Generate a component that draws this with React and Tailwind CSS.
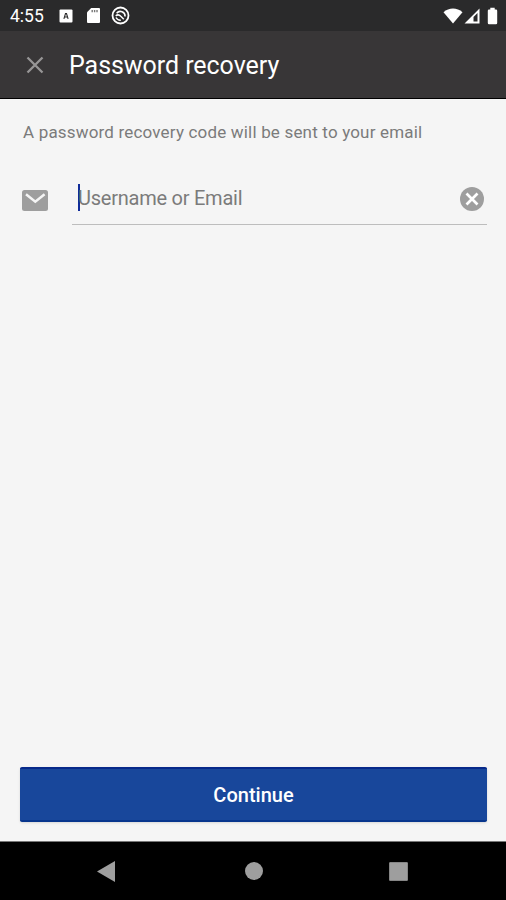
import React, { useState } from "react";

const StatusBar = () => (
  <div className="flex h-[31px] items-center justify-between bg-[#2a2a2b] pl-[10px] pr-[8px] text-white">
    <div className="flex items-center">
      <span className="w-[49px] pt-px text-[17.5px] leading-[30px]">4:55</span>
      <svg width="14" height="14" viewBox="0 0 14 14">
        <rect x="0.5" y="0.5" width="13" height="13" rx="1" fill="#fff" />
        <path d="M4.9 9.8 6.5 4.5h1L9.1 9.8M5.6 8h2.8" fill="none" stroke="#2a2a2b" strokeWidth="1.1" />
      </svg>
      <svg className="ml-[13px]" width="15" height="17" viewBox="0 0 15 17">
        <path d="M5.2 1H13a1 1 0 0 1 1 1v13a1 1 0 0 1-1 1H2a1 1 0 0 1-1-1V5.2z" fill="#fff" />
        <path d="M6.2 3v2.2M8.6 3v2.2M11 3v2.2" stroke="#777" strokeWidth="1.4" />
      </svg>
      <svg className="ml-[10px]" width="19" height="19" viewBox="0 0 19 19" fill="none" stroke="#fff">
        <circle cx="9.5" cy="9.5" r="8" strokeWidth="1.8" />
        <path d="M5.6 7.2a4.8 4.8 0 0 1 8.5 3.2M4.7 9.8c2-1.6 3.8-.9 5.1.5l3 3M5 11.5c.9 1.8 2.6 2.8 4.8 2.7" strokeWidth="1.5" />
      </svg>
    </div>
    <div className="flex items-center">
      <svg width="20" height="16" viewBox="0 0 20 16">
        <path d="M10 15.5.5 4.2C6-.6 14-.6 19.5 4.2z" fill="#fff" />
      </svg>
      <svg className="ml-px" width="16" height="16" viewBox="0 0 16 16">
        <path fillRule="evenodd" d="M15.5.5v15H.5zM9.5 9v4.5h4V5z" fill="#fff" />
      </svg>
      <svg className="ml-[7px]" width="11" height="18" viewBox="0 0 11 18">
        <path d="M3.3.8h4.4v1.8H9a1.2 1.2 0 0 1 1.2 1.2V16A1.2 1.2 0 0 1 9 17.2H2A1.2 1.2 0 0 1 .8 16V3.8A1.2 1.2 0 0 1 2 2.6h1.3z" fill="#fff" />
      </svg>
    </div>
  </div>
);

const Header = () => (
  <header className="flex h-[68px] items-center border-b border-black bg-[#383637] pl-[26px]">
    <button aria-label="Close">
      <svg width="18" height="18" viewBox="0 0 18 18">
        <path d="m1.5 1.5 15 15m0-15-15 15" stroke="#979696" strokeWidth="2.3" />
      </svg>
    </button>
    <h1 className="ml-[25px] pt-[2px] text-[25px] leading-8 tracking-[-0.05px] text-white">Password recovery</h1>
  </header>
);

const EmailField = () => {
  const [value, setValue] = useState("");

  return (
    <div className="flex">
      <svg className="mt-[16px] shrink-0" width="27" height="21" viewBox="0 0 27 21">
        <rect width="26" height="21" rx="2.5" fill="#9e9e9e" />
        <path d="m4 4.3 9.3 7.4 9.3-7.4" fill="none" stroke="#f5f5f5" strokeWidth="2.5" />
      </svg>
      <div className="relative ml-[23px] flex h-[51px] flex-1 items-center border-b border-[#bdbdbd] pl-[7px] pr-[3px]">
        <input
          aria-label="Username or Email"
          className="h-full min-w-0 flex-1 bg-transparent text-[20px] text-[#424242] outline-none"
          value={value}
          onChange={(e) => setValue(e.target.value)}
        />
        {/* Hint and cursor for the empty field */}
        {!value && (
          <div className="pointer-events-none absolute left-[6px] top-[9px] flex h-[28px] items-center">
            <span className="h-[27px] w-[2px] bg-[#102c99]" />
            <span className="-ml-[2px] pt-px text-[20px] leading-7 tracking-[-0.24px] text-[#7b7b7b]">
              Username or Email
            </span>
          </div>
        )}
        <button aria-label="Clear" onClick={() => setValue("")}>
          <svg width="24" height="24" viewBox="0 0 24 24">
            <circle cx="12" cy="12" r="12" fill="#9e9e9e" />
            <path d="m6.5 6.5 11 11m0-11-11 11" stroke="#fff" strokeWidth="2.7" />
          </svg>
        </button>
      </div>
    </div>
  );
};

const NavigationBar = () => (
  <nav className="flex h-[59px] items-center border-t border-[#777] bg-black pl-[97px]">
    <svg width="18" height="21" viewBox="0 0 18 21">
      <path d="M18 0v21L0 10.5z" fill="#9e9e9e" />
    </svg>
    <span className="ml-[129.5px] size-[18px] rounded-full bg-[#9e9e9e]" />
    <span className="ml-[126.5px] size-[19px] rounded-[1px] border border-[#858585] bg-[#9e9e9e]" />
  </nav>
);

export default function App() {
  return (
    <div className="flex h-[900px] w-[506px] flex-col overflow-hidden bg-[#f5f5f5] font-['Roboto',sans-serif]">
      <StatusBar />
      <Header />
      <main className="flex flex-1 flex-col pl-[22px] pr-[19px]">
        <p className="ml-px mt-[21px] text-[17px] leading-6 tracking-[0.18px] text-[#7b7b7b]">
          A password recovery code will be sent to your email
        </p>
        <div className="mt-[30px]">
          <EmailField />
        </div>
        <button className="-ml-[2px] mb-[19px] mt-auto h-[55px] rounded-[2px] border-y-2 border-b-[#07358d] border-t-[#07298a] bg-[#18479b] text-[20px] font-medium text-white shadow-sm">
          Continue
        </button>
      </main>
      <NavigationBar />
    </div>
  );
}
